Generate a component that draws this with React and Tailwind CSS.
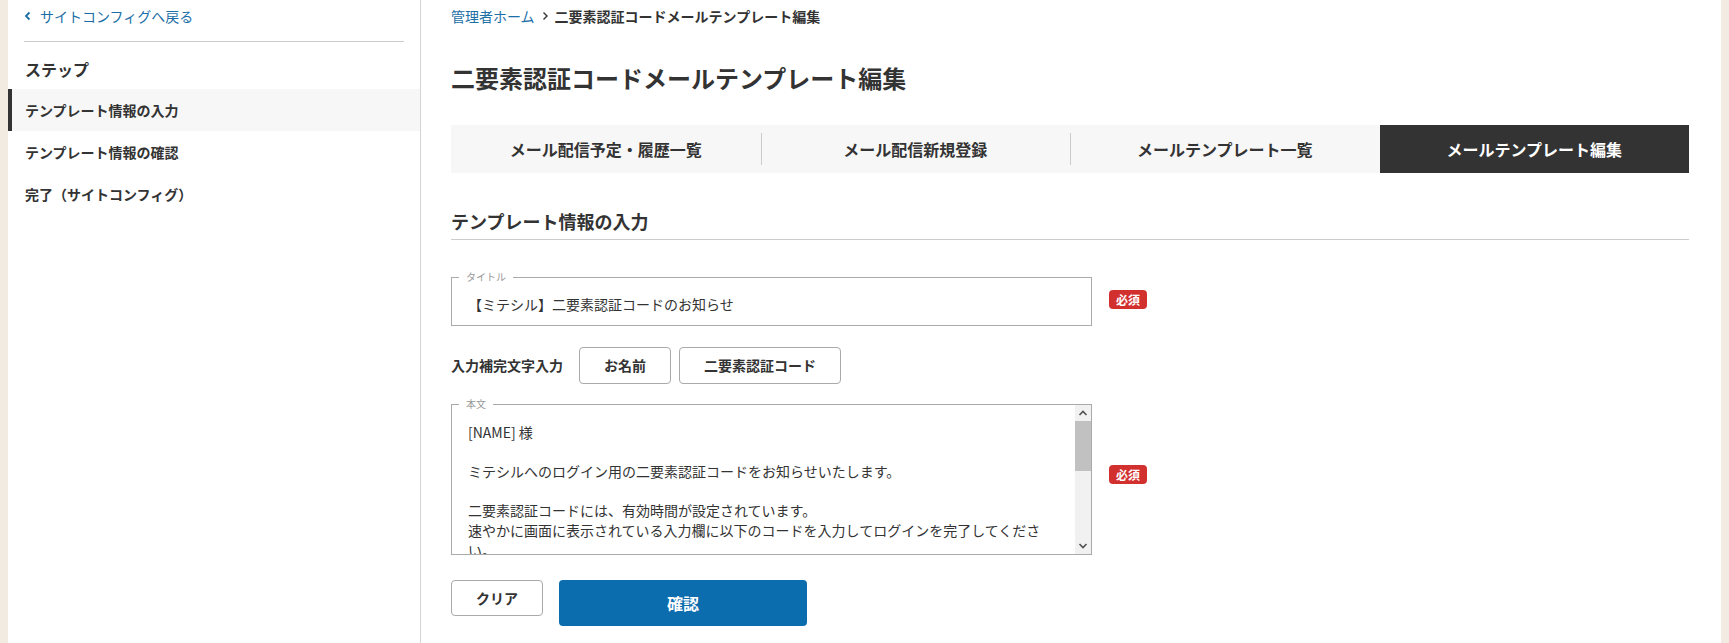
import React from "react";

const font = { fontFamily: '"Noto Sans CJK JP", "Noto Sans", sans-serif' };

const steps = [
  { label: "テンプレート情報の入力", active: true },
  { label: "テンプレート情報の確認", active: false },
  { label: "完了（サイトコンフィグ）", active: false },
];

const tabs = [
  { label: "メール配信予定・履歴一覧", active: false, divider: false },
  { label: "メール配信新規登録", active: false, divider: true },
  { label: "メールテンプレート一覧", active: false, divider: true },
  { label: "メールテンプレート編集", active: true, divider: false },
];

const bodyText = `[NAME] 様

ミテシルへのログイン用の二要素認証コードをお知らせいたします。

二要素認証コードには、有効時間が設定されています。
速やかに画面に表示されている入力欄に以下のコードを入力してログインを完了してください。

二要素認証コード：[CODE]

※本メールは送信専用のアドレスから送信しています。
※本メールにお心当たりのない場合は、お手数ですが破棄してください。`;

const ChevronLeft = () => (
  <svg width="8" height="10" viewBox="0 0 8 10" className="shrink-0">
    <polyline points="5.5,1.5 2,5 5.5,8.5" fill="none" stroke="#1c6fa6" strokeWidth="1.8" />
  </svg>
);

const ChevronRight = () => (
  <svg width="8" height="10" viewBox="0 0 8 10" className="shrink-0">
    <polyline points="2.5,1.5 6,5 2.5,8.5" fill="none" stroke="#333333" strokeWidth="1.4" />
  </svg>
);

const Arrow = ({ up }) => (
  <svg width="16" height="16" viewBox="0 0 16 16" className="shrink-0">
    <polyline
      points={up ? "4.5,10 8,6.5 11.5,10" : "4.5,6 8,9.5 11.5,6"}
      fill="none"
      stroke="#505050"
      strokeWidth="1.6"
    />
  </svg>
);

const Required = ({ className }) => (
  <span
    className={
      "flex h-[19px] w-[38px] items-center justify-center rounded-[4px] bg-[#d2302f] text-[12px] font-bold leading-none text-white " +
      className
    }
  >
    必須
  </span>
);

const Sidebar = () => {
  return (
    <aside className="w-[413px] shrink-0 border-r border-[#d4d4d4] bg-white">
      <div className="px-4 pt-[6px]">
        <a className="flex h-5 items-center gap-[8px] text-[14px] leading-5 text-[#1c6fa6]" href="#">
          <ChevronLeft />
          <span>サイトコンフィグへ戻る</span>
        </a>
        <div className="mt-[15px] border-t border-[#cccccc]" />
        <h2 className="mt-[15px] pl-px text-[16px] font-bold leading-6 text-[#333333]">ステップ</h2>
      </div>
      <ul className="mt-[8px]">
        {steps.map((s) =>
          s.active ? (
            <li
              key={s.label}
              className="flex h-[42px] items-center border-l-4 border-[#333333] bg-[#f7f7f7] pl-[13px] text-[14px] font-bold text-[#333333]"
            >
              {s.label}
            </li>
          ) : (
            <li
              key={s.label}
              className="flex h-[42px] items-center border-l-4 border-transparent pl-[13px] text-[14px] font-bold text-[#333333]"
            >
              {s.label}
            </li>
          )
        )}
      </ul>
    </aside>
  );
};

const Tabs = () => {
  return (
    <nav className="mt-[31px] flex h-12 bg-[#f7f7f7]">
      {tabs.map((t) => {
        if (t.active) {
          return (
            <div key={t.label} className="flex flex-1 items-center justify-center bg-[#333333] text-[16px] font-bold text-white">
              {t.label}
            </div>
          );
        }
        return (
          <div
            key={t.label}
            className={
              t.divider
                ? "relative flex flex-1 items-center justify-center text-[16px] font-bold text-[#333333] before:absolute before:left-0 before:top-2 before:h-8 before:w-px before:bg-[#cccccc] before:content-['']"
                : "relative flex flex-1 items-center justify-center text-[16px] font-bold text-[#333333]"
            }
          >
            {t.label}
          </div>
        );
      })}
    </nav>
  );
};

const FieldLabel = ({ children }) => (
  <span className="absolute left-[7px] top-[-8px] bg-white px-[7px] text-[10px] leading-[14px] text-[#999999]">
    {children}
  </span>
);

// textarea with a classic-looking scrollbar drawn beside it
const BodyField = () => (
  <div className="relative flex w-[641px] border border-[#aaaaaa]">
    <FieldLabel>本文</FieldLabel>
    <textarea
      className="block h-[149px] flex-1 resize-none overflow-hidden bg-transparent pb-2 pl-4 pr-[14px] pt-[18px] text-[14px] leading-[1.4] text-[#333333] outline-none"
      defaultValue={bodyText}
    />
    <div className="flex w-4 flex-col bg-[#f1f1f1]">
      <Arrow up />
      <div className="h-[50px] bg-[#c1c1c1]" />
      <div className="flex-1" />
      <Arrow />
    </div>
  </div>
);

const TemplateForm = () => {
  return (
    <section className="mt-[35px]">
      <h2 className="border-b border-[#cccccc] pb-[5px] text-[18px] font-bold leading-[26px] text-[#333333]">
        テンプレート情報の入力
      </h2>

      <div className="mt-[37px] flex items-center gap-[17px]">
        <div className="relative w-[641px] border border-[#aaaaaa]">
          <FieldLabel>タイトル</FieldLabel>
          <input
            className="block w-full bg-transparent pb-[11px] pl-4 pr-4 pt-4 text-[14px] leading-5 text-[#333333] outline-none"
            defaultValue="【ミテシル】二要素認証コードのお知らせ"
          />
        </div>
        <Required className="mb-[4px]" />
      </div>

      <div className="mt-[21px] flex items-center">
        <span className="mr-4 text-[14px] font-bold text-[#333333]">入力補完文字入力</span>
        <div className="flex gap-2">
          <button className="h-[37px] w-[92px] rounded-[4px] border border-[#aaaaaa] bg-white text-[14px] font-bold text-[#333333]">
            お名前
          </button>
          <button className="h-[37px] w-[162px] rounded-[4px] border border-[#aaaaaa] bg-white text-[14px] font-bold text-[#333333]">
            二要素認証コード
          </button>
        </div>
      </div>

      <div className="mt-[20px] flex items-center gap-[17px]">
        <BodyField />
        <Required className="mb-[10px]" />
      </div>

      <div className="mt-[25px] flex items-start gap-4">
        <button className="h-[36px] w-[92px] rounded-[4px] border border-[#aaaaaa] bg-white text-[14px] font-bold text-[#333333]">
          クリア
        </button>
        <button className="h-[46px] w-[248px] rounded-[4px] bg-[#0b6cae] text-[16px] font-bold text-white">
          確認
        </button>
      </div>
    </section>
  );
};

export default function App() {
  return (
    <div className="min-h-screen bg-[#f1ebe1] px-2" style={font}>
      <div className="flex min-h-screen bg-white">
        <Sidebar />
        <main className="flex-1 pb-8 pl-[30px] pr-8 pt-[6px]">
          <div className="flex h-5 items-center text-[14px] leading-5">
            <a className="text-[#1c6fa6]" href="#">管理者ホーム</a>
            <span className="mx-[6px] flex items-center">
              <ChevronRight />
            </span>
            <span className="font-bold text-[#333333]">二要素認証コードメールテンプレート編集</span>
          </div>
          <h1 className="mt-9 text-[24px] font-bold leading-8 text-[#333333]">
            二要素認証コードメールテンプレート編集
          </h1>
          <Tabs />
          <TemplateForm />
        </main>
      </div>
    </div>
  );
}
